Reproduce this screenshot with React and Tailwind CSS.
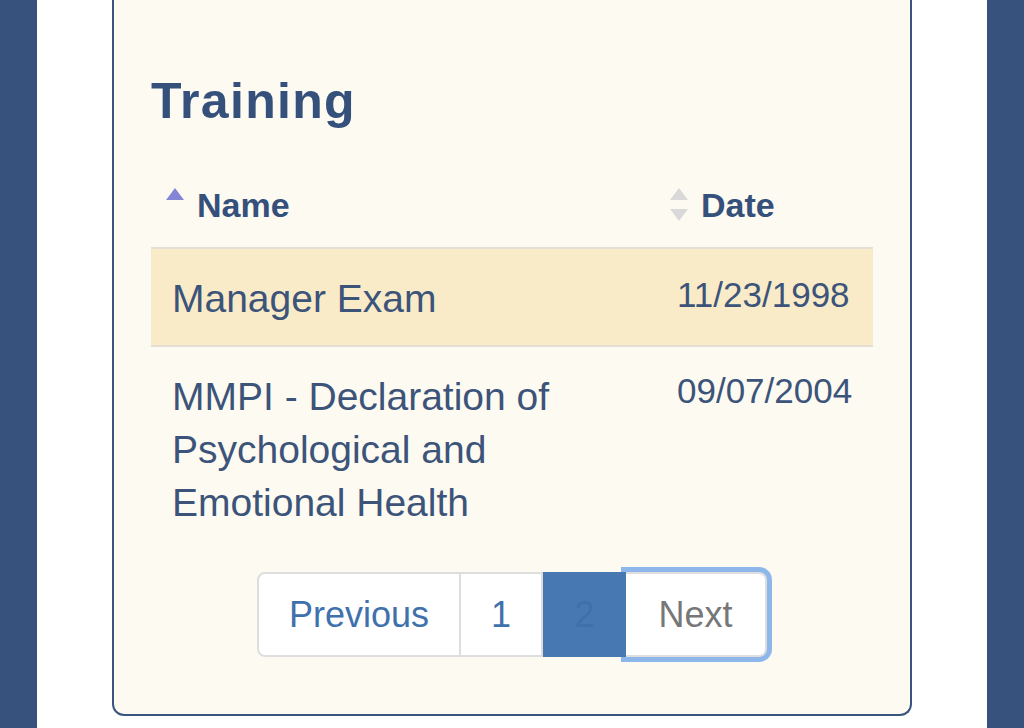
import React from "react";

function SortIcon({ up, down }) {
  return (
    <svg width="20" height="36" viewBox="0 0 20 36" className="shrink-0">
      <polygon points="10,1 19,13 1,13" fill={up} />
      <polygon points="1,22 19,22 10,34" fill={down} />
    </svg>
  );
}

export default function App() {
  return (
    <div
      className="flex h-[728px] w-[1024px] overflow-hidden bg-[#37527c]"
      style={{ fontFamily: '"Liberation Sans", Arial, sans-serif' }}
    >
      <div className="w-[37px] shrink-0 bg-[#37527c]" />
      <div className="flex-1 bg-white px-[75px]">
        <div className="h-[716px] rounded-b-xl border-2 border-t-0 border-[#3a5580] bg-[#fdfaf2] px-[37px] pt-[74px]">
          <h2 className="text-[50px] font-bold leading-[55px] tracking-[1.3px] text-[#34507b]">
            Training
          </h2>

          <div className="mt-[59px] grid grid-cols-[504px_218px] border-b-2 border-[#e4dfd3] pb-[25px]">
            <div className="flex h-[34px] items-center gap-[12px] pl-[14px]">
              <SortIcon up="#8585d6" down="transparent" />
              <span className="text-[34px] font-bold leading-none text-[#34507b]">Name</span>
            </div>
            <div className="flex h-[34px] items-center gap-[12px] pl-[14px]">
              <SortIcon up="#d9d9d9" down="#d9d9d9" />
              <span className="text-[34px] font-bold leading-none text-[#34507b]">Date</span>
            </div>
          </div>

          <div className="grid h-[96px] grid-cols-[504px_218px] bg-[#f9ebc8] text-[#3c5479]">
            <div className="pl-[21px] pr-[21px] pt-[23px] text-[39px] leading-[53px]">Manager Exam</div>
            <div className="pl-[22px] pt-[28px] text-[35px] leading-none">11/23/1998</div>
          </div>
          <div className="h-[2px] bg-[#e4dfd3]" />

          <div className="grid grid-cols-[504px_218px] pb-[16px] text-[#3c5479]">
            <div className="pl-[21px] pr-[21px] pt-[23px] text-[39px] leading-[53px]">
              MMPI - Declaration of Psychological and Emotional Health
            </div>
            <div className="pl-[22px] pt-[26px] text-[35px] leading-none">09/07/2004</div>
          </div>

          <div className="mt-[27px] flex justify-center">
            <div className="flex h-[85px] text-[36px] leading-none">
              <div className="flex w-[204px] items-center justify-center rounded-l-lg border-2 border-[#dedede] bg-white text-[#3f71ad]">
                Previous
              </div>
              <div className="flex w-[82px] items-center justify-center border-y-2 border-r-2 border-[#dedede] bg-white text-[#3f71ad]">
                1
              </div>
              <div className="relative z-10 flex w-[83px] items-center justify-center bg-[#4778b2] text-[#4170a9]">
                2
              </div>
              <div className="flex w-[141px] items-center justify-center rounded-r-lg border-y-2 border-r-2 border-[#dedede] bg-white text-[#777777] shadow-[0_0_0_5px_#8db7ea]">
                Next
              </div>
            </div>
          </div>
        </div>
      </div>
      <div className="w-[37px] shrink-0 bg-[#37527c]" />
    </div>
  );
}
